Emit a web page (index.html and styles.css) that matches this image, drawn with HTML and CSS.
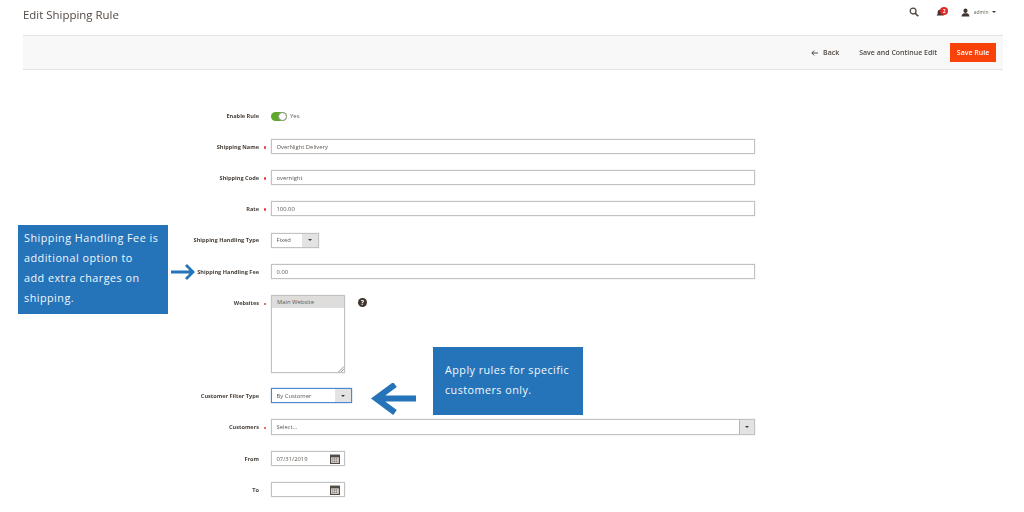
FILE: index.html
```html
<!DOCTYPE html>
<html lang="en">
<head>
<meta charset="utf-8">
<title>Edit Shipping Rule</title>
<link rel="stylesheet" href="styles.css">
</head>
<body>
<div class="page">
  <header class="top">
    <h1 class="title">Edit Shipping Rule</h1>
    <div class="tools">
      <svg class="i-search" width="10" height="10" viewBox="0 0 11 11"><circle cx="4.5" cy="4.5" r="3.2" fill="none" stroke="#514943" stroke-width="1.4"/><path d="M7 7l3.2 3.2" stroke="#514943" stroke-width="1.8"/></svg>
      <span class="bell">
        <svg width="9" height="9" viewBox="0 0 9 9"><path d="M0.5 7.5c1-1 1.2-2 1.2-3.3C1.7 2.6 2.8 1.5 4.3 1.5s2.6 1.1 2.6 2.7c0 1.3.3 2.300 1.200 3.300z" fill="#41362f"/></svg>
        <span class="badge">2</span>
      </span>
      <span class="user">
        <svg width="9" height="9" viewBox="0 0 9 9"><path d="M4.500 0.500c1.300 0 2 1 2 2.200S5.800 5 4.500 5s-2-1.100-2-2.300S3.200.5 4.500.5zM0.500 8.500c0-2 1.500-2.900 2.500-3.200h3c1 .3 2.500 1.200 2.500 3.200z" fill="#41362f"/></svg>
        <span class="user-name">admin</span>
        <i class="caret"></i>
      </span>
    </div>
  </header>

  <div class="toolbar">
    <a class="back"><svg width="7" height="6" viewBox="0 0 7 6"><path d="M7 3H1M3.200.6L.8 3l2.400 2.400" fill="none" stroke="#41362f" stroke-width="0.9"/></svg>Back</a>
    <a class="save-cont">Save and Continue Edit</a>
    <a class="save">Save Rule</a>
  </div>

  <form class="form">
    <div class="row row-switch">
      <label class="lab">Enable Rule</label>
      <div class="ctl"><span class="switch"><i class="knob"></i></span><span class="yes">Yes</span></div>
    </div>
    <div class="row">
      <label class="lab req">Shipping Name</label>
      <div class="ctl"><div class="input wide">OverNight Delivery</div></div>
    </div>
    <div class="row">
      <label class="lab req">Shipping Code</label>
      <div class="ctl"><div class="input wide">overnight</div></div>
    </div>
    <div class="row">
      <label class="lab req">Rate</label>
      <div class="ctl"><div class="input wide">100.00</div></div>
    </div>
    <div class="row row-gap">
      <label class="lab">Shipping Handling Type</label>
      <div class="ctl"><div class="input select small-select"><span class="grow">Fixed</span><span class="sel-btn"><i class="caret"></i></span></div></div>
    </div>
    <div class="row">
      <label class="lab">Shipping Handling Fee</label>
      <div class="ctl"><div class="input wide">0.00</div></div>
    </div>
    <div class="row row-multi">
      <label class="lab req">Websites</label>
      <div class="ctl ctl-top">
        <div class="multi">
          <div class="opt">Main Website</div>
          <svg class="grip" width="6" height="6" viewBox="0 0 6 6"><path d="M0.500 6L6 .5M3 6l3-3" stroke="#666" stroke-width="0.7"/></svg>
        </div>
        <span class="help">?</span>
      </div>
    </div>
    <div class="row">
      <label class="lab">Customer Filter Type</label>
      <div class="ctl"><div class="input select focus"><span class="grow">By Customer</span><span class="sel-btn"><i class="caret"></i></span></div></div>
    </div>
    <div class="row row-gap">
      <label class="lab req">Customers</label>
      <div class="ctl"><div class="input select wide tall"><span class="grow">Select...</span><span class="sel-btn dark"><i class="caret"></i></span></div></div>
    </div>
    <div class="row">
      <label class="lab">From</label>
      <div class="ctl"><div class="input date"><span class="grow">07/31/2019</span>
        <svg class="cal" width="10" height="10" viewBox="0 0 9 9"><rect x="0.500" y="1" width="8" height="7.500" fill="#d8d4d0" stroke="#514943"/><rect x="0.500" y="1" width="8" height="2" fill="#514943"/><path d="M2 4.500h5M2 6.500h5" stroke="#514943" stroke-width="0.800" stroke-dasharray="1 .6"/></svg></div></div>
    </div>
    <div class="row">
      <label class="lab">To</label>
      <div class="ctl"><div class="input date"><span class="grow"></span>
        <svg class="cal" width="10" height="10" viewBox="0 0 9 9"><rect x="0.500" y="1" width="8" height="7.500" fill="#d8d4d0" stroke="#514943"/><rect x="0.500" y="1" width="8" height="2" fill="#514943"/><path d="M2 4.500h5M2 6.500h5" stroke="#514943" stroke-width="0.800" stroke-dasharray="1 .6"/></svg></div></div>
    </div>
  </form>

  <div class="note note-left">Shipping Handling Fee is<br>additional option to<br>add extra charges on<br>shipping.</div>
  <svg class="arrow arrow-right" width="24" height="18" viewBox="0 0 24 18"><path d="M0 9h21M15 2l7 7-7 7" fill="none" stroke="#2574b9" stroke-width="2.800"/></svg>
  <div class="note note-right">Apply rules for specific<br>customers only.</div>
  <svg class="arrow arrow-left" width="46" height="32" viewBox="0 0 46 32"><path d="M45 15.500H6M24 1.500L5 15.500l19 14" fill="none" stroke="#2574b9" stroke-width="6"/></svg>
</div>
</body>
</html>
```

FILE: styles.css
```css
* { box-sizing: border-box; }
html, body { margin: 0; padding: 0; background: #fff; }
body { font-family: "Open Sans", "Liberation Sans", sans-serif; color: #41362f; }
.page { position: relative; width: 1024px; height: 512px; overflow: hidden; filter: blur(0.35px); }

.top { display: flex; justify-content: space-between; align-items: center; height: 35px; padding: 0 28px 6px 23px; }
.title { margin: 0; font-size: 11.450px; font-weight: 400; color: #514943; }
.tools { display: flex; align-items: center; margin-bottom: 5px; }
.bell { position: relative; display: flex; width: 13px; margin-left: 17px; }
.badge { position: absolute; left: 4px; top: -1px; width: 8px; height: 8px; border-radius: 50%; background: #e22626; color: #fff; font-size: 5px; font-weight: 700; line-height: 8px; text-align: center; }
.user { display: flex; align-items: center; margin-left: 11.500px; }
.user-name { margin: 0 3.500px 0 4px; font-size: 5px; color: #676056; }
.caret { display: inline-block; width: 0; height: 0; border: 2px solid transparent; border-top: 2.500px solid #41362f; border-bottom: 0; }

.toolbar { display: flex; justify-content: flex-end; align-items: center; height: 35px; margin: 0 21px 0 23px; padding-right: 7px; background: #f8f8f8; border-top: 1px solid #e3e3e3; border-bottom: 1px solid #e3e3e3; font-size: 7px; font-weight: 600; color: #514943; }
.back { display: flex; align-items: center; gap: 5px; margin-right: 20px; }
.save-cont { margin-right: 13px; }
.save { display: flex; align-items: center; justify-content: center; width: 46px; height: 19px; color: #fff; background-color: #f9420a; }

.form { padding-top: 31px; }
.row { display: flex; align-items: center; height: 31px; }
.row-gap { height: 32px; }
.row-switch { height: 30px; }
.row-multi { align-items: flex-start; height: 93px; padding-top: 8px; }
.lab { position: relative; width: 259px; text-align: right; font-size: 5.600px; font-weight: 700; color: #4a423c; }
.row-multi .lab { padding-top: 4px; }
.req::after { content: ""; position: absolute; left: 263.500px; top: 3.500px; width: 2.500px; height: 2.500px; border-radius: 50%; background: #e8393a; }
.row-multi .req::after { top: 7.500px; }
.ctl { display: flex; align-items: center; margin-left: 12px; }
.ctl-top { align-items: flex-start; }

.input { display: flex; align-items: center; height: 15px; padding-left: 4.500px; border: 1px solid #c2c2c2; box-shadow: 0 0 1px #c2c2c2; background: #fff; font-size: 5.850px; color: #5f5750; }
.grow { flex: 1; }
.select { width: 81px; padding-right: 0; }
.small-select { width: 48px; }
.wide { width: 484px; }
.tall { height: 16px; }
.sel-btn { display: flex; align-items: center; justify-content: center; width: 16px; align-self: stretch; background: #e3e3e3; }
.sel-btn.dark { width: 15px; border-left: 1px solid #b5b5b5; }
.focus { border-color: #4a88d6; box-shadow: 0 0 1px #4a88d6; }
.date { width: 74px; padding-right: 4px; }

.switch { position: relative; display: block; width: 16px; height: 9px; border-radius: 5px; background: #5fa82a; }
.knob { position: absolute; right: 0; top: 0; width: 9px; height: 9px; border-radius: 50%; background: #fff; border: 1px solid #8f8f8f; }
.yes { margin-left: 3px; font-size: 6px; color: #5f5750; }

.multi { position: relative; width: 74px; height: 78px; border: 1px solid #c2c2c2; box-shadow: 0 0 1px #c2c2c2; background: #fff; font-size: 5.850px; color: #5f5750; }
.opt { height: 12px; line-height: 12px; padding-left: 5px; background: #dfdddb; }
.grip { position: absolute; right: 0; bottom: 0; }
.help { display: block; width: 9px; height: 9px; margin: 3px 0 0 13px; border-radius: 50%; background: #41362f; color: #fff; font-size: 7px; font-weight: 700; line-height: 9px; text-align: center; }

.note { position: absolute; background: #2574b9; color: #f3f8fc; font-size: 10.800px; line-height: 20px; }
.note-left { left: 18px; top: 225px; width: 150px; height: 89px; padding: 3px 4px 0 6px; letter-spacing: 0.480px; }
.note-right { left: 433px; top: 347px; width: 150px; height: 68px; padding: 13px 8px 0 12px; letter-spacing: 0.450px; }
.arrow { position: absolute; }
.arrow-right { left: 171px; top: 263px; }
.arrow-left { left: 371px; top: 383px; }
```
